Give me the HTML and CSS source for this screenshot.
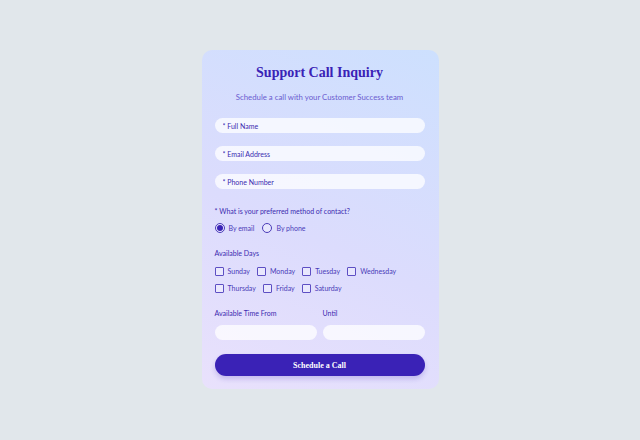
FILE: index.html
```html
<!DOCTYPE html>
<html lang="en">
<head>
<meta charset="utf-8">
<title>Support Call Inquiry</title>
<link rel="stylesheet" href="styles.css">
</head>
<body>
<main class="page">
  <form class="card">
    <h1 class="title">Support Call Inquiry</h1>
    <p class="subtitle">Schedule a call with your Customer Success team</p>

    <div class="field"><input class="input" type="text" placeholder="* Full Name"></div>
    <div class="field"><input class="input" type="email" placeholder="* Email Address"></div>
    <div class="field"><input class="input" type="tel" placeholder="* Phone Number"></div>

    <div class="group contact">
      <div class="label">* What is your preferred method of contact?</div>
      <div class="options">
        <label class="option"><span class="radio checked"></span>By email</label>
        <label class="option"><span class="radio"></span>By phone</label>
      </div>
    </div>

    <div class="group days">
      <div class="label">Available Days</div>
      <div class="options">
        <label class="option"><span class="check"></span>Sunday</label>
        <label class="option"><span class="check"></span>Monday</label>
        <label class="option"><span class="check"></span>Tuesday</label>
        <label class="option"><span class="check"></span>Wednesday</label>
      </div>
      <div class="options">
        <label class="option"><span class="check"></span>Thursday</label>
        <label class="option"><span class="check"></span>Friday</label>
        <label class="option"><span class="check"></span>Saturday</label>
      </div>
    </div>

    <div class="times">
      <div class="time">
        <div class="label">Available Time From</div>
        <input class="input" type="text">
      </div>
      <div class="time">
        <div class="label">Until</div>
        <input class="input" type="text">
      </div>
    </div>

    <button class="submit" type="button">Schedule a Call</button>
  </form>
</main>
</body>
</html>
```

FILE: styles.css
```css
* { box-sizing: border-box; }

html, body {
  margin: 0;
  padding: 0;
  background: #e1e7eb;
}

body {
  font-family: Lato, "Open Sans", sans-serif;
  color: #3b2ab0;
}

.page {
  width: 640px;
  height: 440px;
  display: flex;
  justify-content: center;
  padding-top: 50px;
}

.card {
  width: 237px;
  height: 339px;
  border-radius: 10px;
  padding: 14px 14px 0 13px;
  background: linear-gradient(205deg, #cde0fe 0%, #dcdcfd 55%, #e9e1fc 100%);
  display: flex;
  flex-direction: column;
}

.title {
  margin: 0;
  text-align: center;
  font-family: "Liberation Serif", "DejaVu Serif", serif;
  font-weight: bold;
  font-size: 14px;
  line-height: 18px;
  color: #3a22b6;
}

.subtitle {
  margin: 10px 0 0;
  text-align: center;
  font-size: 7.8px;
  line-height: 10px;
  color: #6b5cd0;
}

.input {
  display: block;
  width: 100%;
  height: 15px;
  border: none;
  border-radius: 8px;
  background: rgba(255, 255, 255, 0.75);
  padding: 0 8px;
  font-family: Lato, "Open Sans", sans-serif;
  font-size: 7px;
  color: #3b2ab0;
  outline: none;
}

.input::placeholder { color: #3b2ab0; opacity: 1; }

.subtitle + .field { margin-top: 16px; }
.field + .field { margin-top: 13px; }

.label {
  font-size: 7px;
  line-height: 9px;
  color: #3b2ab0;
}

.contact { margin-top: 18px; }

.options {
  display: flex;
  gap: 10px;
}

.contact .options { margin-top: 7px; gap: 8px; }

.option {
  display: flex;
  align-items: center;
  gap: 4px;
  font-size: 7px;
  line-height: 10px;
  color: #4a3bb8;
}

.radio {
  width: 10px;
  height: 10px;
  border: 1px solid #4a3bb8;
  border-radius: 50%;
  display: inline-flex;
  align-items: center;
  justify-content: center;
  background: rgba(255,255,255,0.3);
}

.radio.checked::after {
  content: "";
  width: 6px;
  height: 6px;
  border-radius: 50%;
  background: #3a22b6;
}

.check {
  width: 9px;
  height: 9px;
  border: 1px solid #5d4fc4;
  border-radius: 1px;
  background: rgba(255,255,255,0.3);
}

.days { margin-top: 16px; }
.days .options { margin-top: 8px; gap: 7px; }
.days .options + .options { margin-top: 7px; }

.times {
  display: flex;
  gap: 6px;
  margin-top: 16px;
}

.time { flex: 1; }
.time .input { margin-top: 7px; }

.submit {
  margin-top: 14px;
  width: 100%;
  height: 22px;
  border: none;
  border-radius: 11px;
  background: #3a22b6;
  color: #fff;
  font-family: "Liberation Serif", "DejaVu Serif", serif;
  font-weight: bold;
  font-size: 8px;
  box-shadow: 0 3px 5px rgba(58, 34, 182, 0.2);
  cursor: pointer;
}
```
